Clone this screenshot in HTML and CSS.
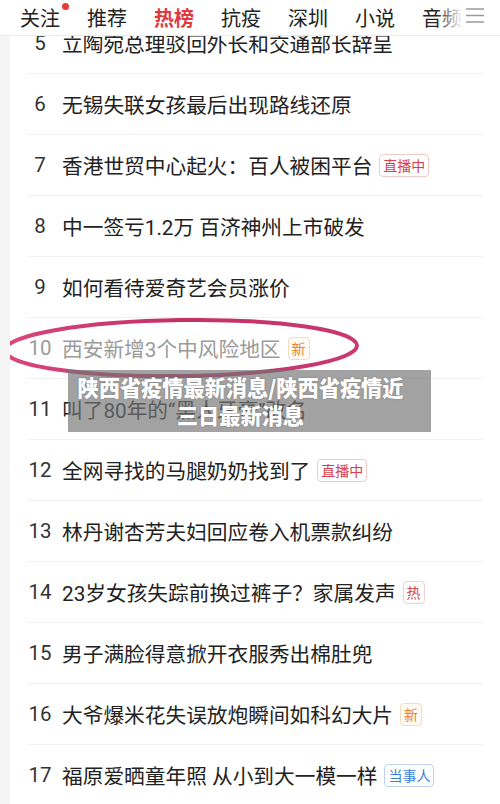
FILE: index.html
```html
<!DOCTYPE html>
<html lang="zh-CN">
  <head>
    <meta charset="UTF-8" />
    <meta name="viewport" content="width=device-width, initial-scale=1.0" />
    <title>热榜</title>
    <link rel="stylesheet" href="styles.css">
  </head>
  <body>
    <div class="header">
      <div class="tabs">
        <span class="tab has-dot">关注</span>
        <span class="tab">推荐</span>
        <span class="tab active">热榜</span>
        <span class="tab">抗疫</span>
        <span class="tab">深圳</span>
        <span class="tab">小说</span>
        <span class="tab">音频</span>
      </div>
      <div class="fade"></div>
      <svg class="menu" width="18" height="15" viewBox="0 0 18 15">
        <path d="M0 1h18M0 7.5h18M0 14h18" stroke="#9a9a9a" stroke-width="1.6" />
      </svg>
    </div>

    <div class="main">
      <ul class="list">
        <li class="row"><span class="num">5</span><span class="title">立陶宛总理驳回外长和交通部长辞呈</span></li>
        <li class="row"><span class="num">6</span><span class="title">无锡失联女孩最后出现路线还原</span></li>
        <li class="row"><span class="num">7</span><span class="title">香港世贸中心起火：百人被困平台</span><span class="tag live">直播中</span></li>
        <li class="row"><span class="num">8</span><span class="title">中一签亏1.2万 百济神州上市破发</span></li>
        <li class="row"><span class="num">9</span><span class="title">如何看待爱奇艺会员涨价</span></li>
        <li class="row read"><span class="num">10</span><span class="title">西安新增3个中风险地区</span><span class="tag new">新</span></li>
        <li class="row"><span class="num">11</span><span class="title">叫了80年的“黑人牙膏”改名</span></li>
        <li class="row"><span class="num">12</span><span class="title">全网寻找的马腿奶奶找到了</span><span class="tag live">直播中</span></li>
        <li class="row"><span class="num">13</span><span class="title">林丹谢杏芳夫妇回应卷入机票款纠纷</span></li>
        <li class="row"><span class="num">14</span><span class="title">23岁女孩失踪前换过裤子？家属发声</span><span class="tag hot">热</span></li>
        <li class="row"><span class="num">15</span><span class="title">男子满脸得意掀开衣服秀出棉肚兜</span></li>
        <li class="row"><span class="num">16</span><span class="title">大爷爆米花失误放炮瞬间如科幻大片</span><span class="tag new">新</span></li>
        <li class="row"><span class="num">17</span><span class="title">福原爱晒童年照 从小到大一模一样</span><span class="tag person">当事人</span></li>
      </ul>

      <svg class="circle" width="366" height="68" viewBox="0 0 366 68">
        <defs>
          <linearGradient id="ink" x1="0" y1="0" x2="1" y2="0">
            <stop offset="0" stop-color="#d9477c" />
            <stop offset="0.5" stop-color="#c42f66" />
            <stop offset="1" stop-color="#c93a70" />
          </linearGradient>
        </defs>
        <ellipse cx="182" cy="34" rx="176" ry="28" fill="none" stroke="url(#ink)" stroke-width="4" transform="rotate(-0.8 182 34)" />
      </svg>

      <div class="caption">陕西省疫情最新消息/陕西省疫情近<br>三日最新消息</div>
    </div>
  </body>
</html>
```

FILE: styles.css
```css
* {
  margin: 0;
  padding: 0;
  box-sizing: border-box;
}

body {
  font-family: Roboto, "Noto Sans CJK SC", sans-serif;
  background-color: #f5f5f5;
  height: 804px;
  overflow: hidden;
  display: flex;
  flex-direction: column;
}

.header {
  position: relative;
  z-index: 2;
  height: 36px;
  background-color: #ffffff;
  border-bottom: 1px solid #ebebeb;
  display: flex;
  align-items: center;
}

.tabs {
  display: flex;
  gap: 27px;
  padding-left: 20px;
  white-space: nowrap;
  overflow: hidden;
  width: 462px;
}

.tab {
  position: relative;
  font-family: "Noto Sans CJK SC", sans-serif;
  font-size: 20px;
  line-height: 32px;
  color: #222;
  flex: none;
}

.tab.has-dot::after {
  content: "";
  position: absolute;
  top: 1px;
  right: -9px;
  width: 7px;
  height: 7px;
  border-radius: 50%;
  background-color: #e63a3a;
}

.tab.active {
  color: #e0393e;
  font-weight: bold;
}

.tab.active::after {
  content: "";
  position: absolute;
  left: 8px;
  right: 8px;
  bottom: -3px;
  height: 3px;
  border-radius: 2px;
  background-color: #e0393e;
}

.fade {
  position: absolute;
  left: 436px;
  top: 0;
  width: 30px;
  height: 34px;
  background: linear-gradient(90deg, rgba(255, 255, 255, 0), #ffffff 90%);
}

.menu {
  margin-left: 4px;
  margin-top: -4px;
}

.main {
  position: relative;
  flex: 1;
  margin-left: 10px;
  background-color: #ffffff;
  overflow: hidden;
}

.list {
  list-style: none;
  margin: -23px 17px 0 17px;
}

.row {
  height: 61px;
  border-bottom: 1px solid #f1f1f1;
  display: flex;
  align-items: center;
}

.num {
  width: 26px;
  text-align: center;
  font-size: 20.5px;
  color: #333;
  flex: none;
}

.title {
  margin-left: 9px;
  font-size: 20.7px;
  color: #222;
  white-space: nowrap;
}

.read .num,
.read .title {
  color: #9a9a9a;
}

.tag {
  margin-left: 7px;
  height: 23px;
  padding: 0 3px;
  border: 1px solid;
  border-radius: 4px;
  font-family: "Noto Sans CJK SC", sans-serif;
  font-size: 14px;
  line-height: 21px;
  flex: none;
}

.live {
  color: #d8414a;
  border-color: #f1c9c9;
}

.new {
  color: #e8862a;
  border-color: #f3dcc4;
  background-color: #fffaf4;
}

.hot {
  color: #d84a4a;
  border-color: #efd0d0;
}

.person {
  color: #3b80d6;
  border-color: #bcd3ee;
}

.circle {
  position: absolute;
  left: -11px;
  top: 278px;
}

.caption {
  position: absolute;
  left: 58px;
  top: 334px;
  width: 363px;
  height: 62px;
  padding: 3px 18px 0 0;
  background-color: rgba(118, 118, 118, 0.68);
  color: #ffffff;
  font-family: "Noto Sans CJK SC", sans-serif;
  font-weight: 900;
  font-size: 21.2px;
  line-height: 28px;
  text-align: center;
  white-space: nowrap;
  text-shadow: 0 0 2px rgba(0, 0, 0, 0.25);
}
```
